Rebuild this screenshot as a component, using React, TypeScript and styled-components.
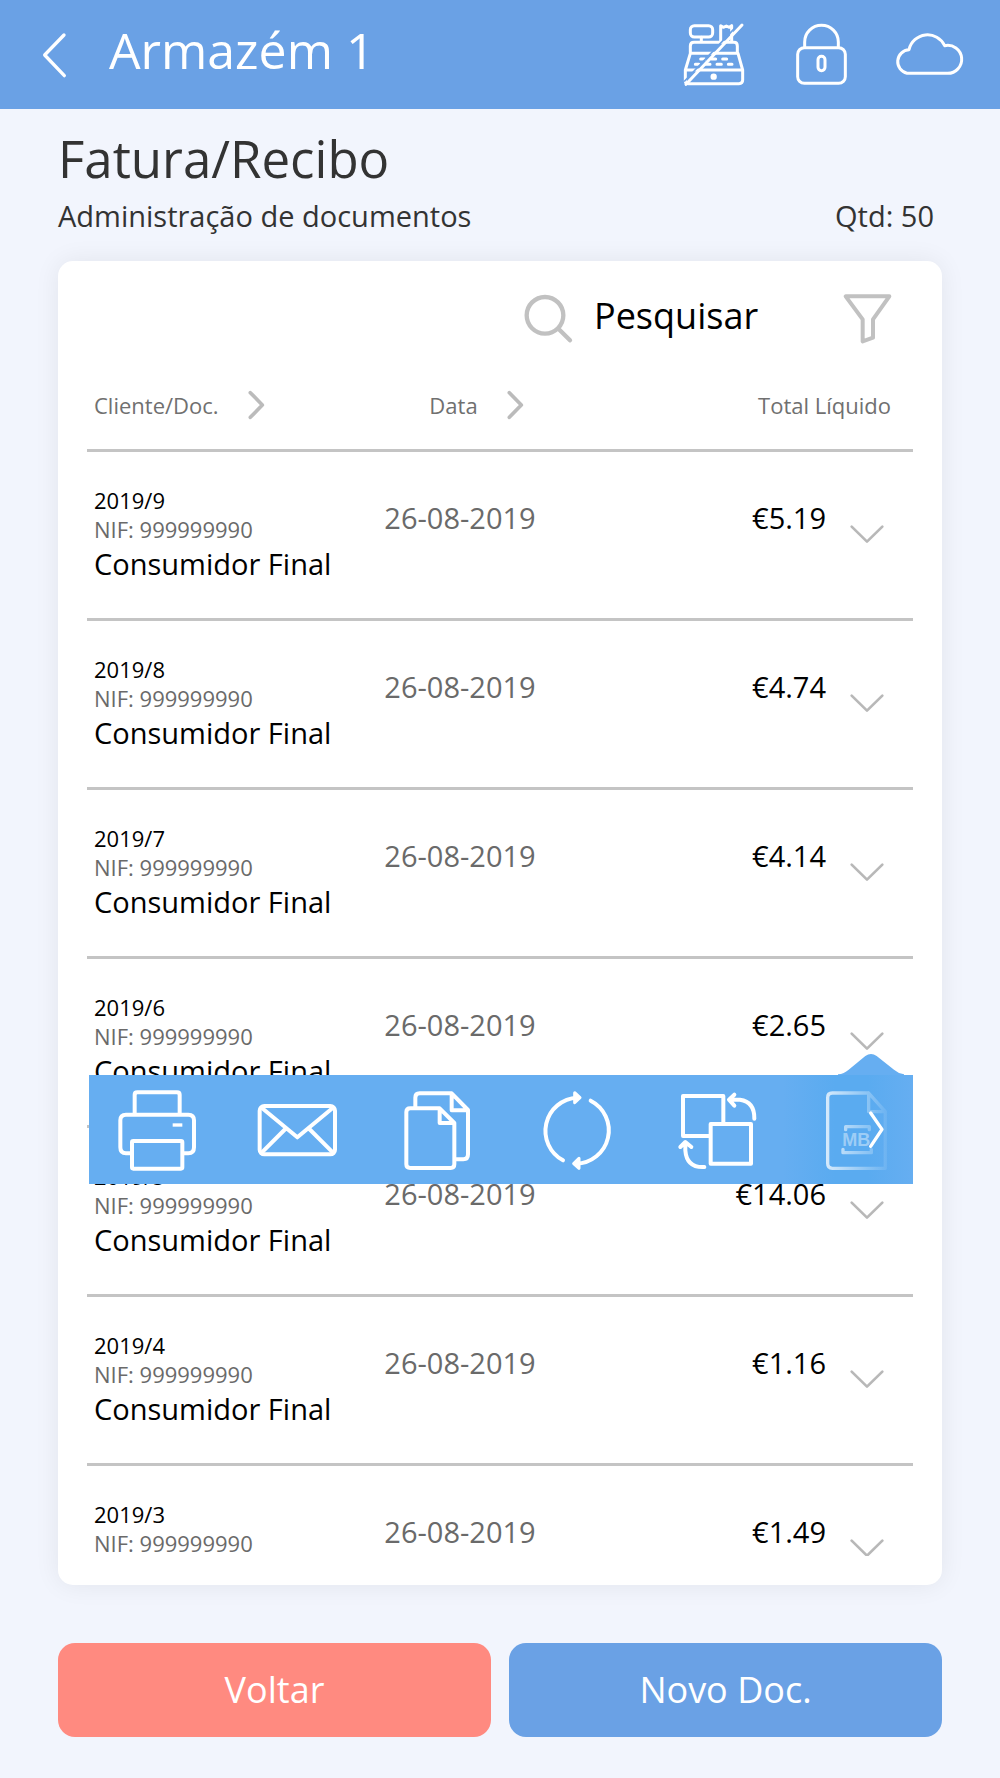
import React from "react";
import styled, { createGlobalStyle } from "styled-components";

const GlobalStyle = createGlobalStyle`
  *, *::before, *::after { box-sizing: border-box; }
  body {
    margin: 0;
    background: #f2f5fd;
    font-family: "Open Sans", "Noto Sans", sans-serif;
    color: #000;
  }
  button, input { font: inherit; color: inherit; }
`;

const Screen = styled.div`
  display: flex;
  flex-direction: column;
  height: 100vh;
`;

const IconButton = styled.button`
  display: flex;
  flex: none;
  padding: 0;
  border: 0;
  background: none;
  cursor: pointer;
`;

const Drawing = styled.svg<{ $color?: string; $weight?: number }>`
  display: block;
  flex: none;
  fill: none;
  stroke: ${(p) => p.$color ?? "#fff"};
  stroke-width: ${(p) => p.$weight ?? 9};
  stroke-linecap: round;
  stroke-linejoin: round;
`;

const TopBar = styled.header`
  display: flex;
  flex: none;
  align-items: center;
  height: 109px;
  padding: 0 36px 0 40px;
  background: #6aa1e5;
  color: #fff;
`;

const BarTitle = styled.h1`
  flex: 1;
  margin: 0;
  padding: 0 0 10px 40px;
  font-size: 50px;
  line-height: 68px;
  font-weight: 400;
`;

const BarActions = styled.div`
  display: flex;
  gap: 43px;
`;

const Content = styled.main`
  display: flex;
  flex: 1;
  flex-direction: column;
  min-height: 0;
  padding: 15px 58px 41px;
`;

const Heading = styled.h2`
  margin: 0;
  font-size: 51px;
  line-height: 68px;
  font-weight: 400;
  color: #333;
`;

const SubHeading = styled.div`
  display: flex;
  justify-content: space-between;
  padding: 4px 8px 0 0;
  margin-bottom: 25px;
  font-size: 29px;
  line-height: 40px;
  color: #333;

  p { margin: 0; }
`;

const Card = styled.section`
  display: flex;
  flex: 1;
  flex-direction: column;
  min-height: 0;
  padding: 31px 29px 29px;
  border-radius: 15px;
  background: #fff;
  box-shadow: 0 0 26px rgba(0, 0, 0, 0.07);
`;

const SearchRow = styled.form`
  display: flex;
  flex: none;
  align-items: center;
  justify-content: flex-end;
  margin: 0 20px 20px 0;
`;

const SearchInput = styled.input`
  width: 267px;
  height: 52px;
  padding: 0 0 6px 20px;
  border: 0;
  outline: 0;
  background: none;
  font-size: 36px;

  &::placeholder { color: #000; opacity: 1; }
`;

const ListArea = styled.div`
  flex: 1;
  min-height: 0;
  overflow-y: auto;
  scrollbar-width: none;
`;

const Table = styled.table`
  width: 100%;
  table-layout: fixed;
  border-collapse: separate;
  border-spacing: 0;
  text-align: left;
`;

const ClientCol = styled.col`width: 36%;`;
const DateCol = styled.col`width: 24%;`;
const ActionCol = styled.col`width: 87px;`;

const HeadCell = styled.th<{ $indent?: number; $end?: boolean }>`
  height: 88px;
  padding: 0 ${(p) => (p.$end ? 22 : 0)}px 3px ${(p) => p.$indent ?? 0}px;
  border-bottom: 3px solid #c4c4c4;
  text-align: ${(p) => (p.$end ? "right" : "left")};
  font-size: 22px;
  line-height: 30px;
  font-weight: 400;
  color: #707070;
`;

const SortButton = styled.button`
  display: flex;
  align-items: center;
  gap: 27px;
  padding: 0;
  border: 0;
  background: none;
  cursor: pointer;
`;

const Row = styled.tr`
  position: relative;
`;

const Cell = styled.td<{ $top: number; $end?: boolean; $muted?: boolean }>`
  height: 169px;
  padding: ${(p) => p.$top}px 0 0;
  border-bottom: 3px solid #c4c4c4;
  vertical-align: top;
  text-align: ${(p) => (p.$end ? "right" : "left")};
  font-size: 29px;
  line-height: 40px;
  color: ${(p) => (p.$muted ? "#6a6a6a" : "#000")};
`;

const Client = styled.div`
  display: flex;
  flex-direction: column;
  padding-left: 7px;
`;

const Small = styled.span<{ $muted?: boolean }>`
  font-size: 22px;
  line-height: 29px;
  color: ${(p) => (p.$muted ? "#6a6a6a" : "#000")};
`;

const ExpandButton = styled(IconButton)`
  padding: 0 25px 0 20px;
`;

const ActionMenu = styled.div`
  position: absolute;
  z-index: 1;
  top: 116px;
  left: 2px;
  right: 0;
  display: flex;
  justify-content: space-between;
  padding: 12px 16px 13px 28px;
  background: #66aef1;
`;

const MenuArrow = styled.svg`
  position: absolute;
  top: -22px;
  right: 9px;
  fill: #66aef1;
`;

const NextShade = styled.div`
  position: absolute;
  top: 0;
  right: 0;
  bottom: 0;
  width: 130px;
  background: linear-gradient(90deg, #5aabf000, #5aabf0 40%, #5aabf0 65%, #5aabf000);
`;

const MenuIconButton = styled(IconButton)`
  position: relative;
`;

const NextButton = styled(IconButton)`
  position: absolute;
  top: 34px;
  right: 28px;
`;

const Footer = styled.footer`
  display: grid;
  flex: none;
  grid-template-columns: 1fr 1fr;
  gap: 18px;
  margin-top: 58px;
`;

const FooterButton = styled.button<{ $color: string }>`
  height: 94px;
  padding: 0;
  border: 0;
  border-radius: 17px;
  background: ${(p) => p.$color};
  color: #fff;
  font-size: 36px;
  line-height: 50px;
  cursor: pointer;
`;

const BackIcon = () => (
  <Drawing width="29" height="48" viewBox="120 90 87 144" $weight={10}>
    <path d="M192 102 L134 162 L193 224" />
  </Drawing>
);

const RegisterIcon = () => (
  <Drawing width="66" height="65" viewBox="66 66 198 195">
    <rect x="91" y="77" width="67" height="34" rx="12" />
    <path d="M124 112 V125 M91 158 V138 Q91 127 102 127 H222 Q232 127 232 138 V158 M182 126 V77 L190 82 L199 78 L208 82 L215 77 V126" />
    <path d="M91 160 H234 L248 210 V240 Q248 251 237 251 H86 Q76 251 76 242 V210 Z M76 210 H248" />
    <path d="M122 177 H134 M155 177 H167 M188 177 H200 M106 193 H117 M138 193 H150 M171 193 H184 M205 193 H216" />
    <circle cx="161" cy="230" r="5" fill="#fff" />
    <path d="M74 243 L240 68" stroke="#6aa1e5" strokeWidth="5" />
    <path d="M78 253 L246 75" />
  </Drawing>
);

const LockIcon = () => (
  <Drawing width="58" height="65" viewBox="396 66 174 195">
    <rect x="416" y="143" width="143" height="107" rx="20" />
    <path d="M437 142 V126 A50 50 0 0 1 538 126 V142" />
    <rect x="477" y="169" width="21" height="43" rx="10" />
  </Drawing>
);

const CloudIcon = () => (
  <Drawing width="72" height="65" viewBox="702 66 216 195">
    <path d="M747 220 A36 36 0 0 1 753 149 A57 57 0 0 1 860 137 A42 42 0 1 1 868 220 Z" />
  </Drawing>
);

const SearchIcon = () => (
  <Drawing width="52" height="52" viewBox="66 306 156 156" $color="#c1c1c1" $weight={13}>
    <circle cx="135" cy="376" r="55" />
    <path d="M176 417 L210 451" />
  </Drawing>
);

const FilterIcon = () => (
  <Drawing width="52" height="52" viewBox="1023 306 156 156" $color="#c1c1c1" $weight={12}>
    <path d="M1037 319 H1168 L1119 388 V443 L1088 454 V388 Z" />
  </Drawing>
);

const SortIcon = () => (
  <Drawing width="20" height="30" viewBox="618 35 60 90" $color="#bbb" $weight={11}>
    <path d="M631 43 L667 80 L631 117" />
  </Drawing>
);

const DownIcon = () => (
  <Drawing width="42" height="24" viewBox="858 188 126 72" $color="#b8b8b8" $weight={8}>
    <path d="M875 199 L921 244 L967 199" />
  </Drawing>
);

const PrinterIcon = () => (
  <Drawing width="80" height="84" viewBox="141 171 240 252" $weight={12}>
    <path d="M194 250 V194 Q194 187 202 187 H321 Q329 187 329 194 V250" />
    <path d="M182 370 H168 Q151 370 151 352 V271 Q151 254 168 254 H355 Q372 254 372 271 V352 Q372 370 355 370 H343" />
    <rect x="186" y="333" width="151" height="83" rx="4" />
    <path d="M313 285 H332" strokeLinecap="square" strokeWidth="10" />
  </Drawing>
);

const MailIcon = () => (
  <Drawing width="80" height="84" viewBox="561 171 240 252" $weight={12}>
    <rect x="569" y="228" width="226" height="145" rx="14" />
    <path d="M575 233 L682 322 L789 233 M575 368 L646 297 M789 368 L718 297" />
  </Drawing>
);

const CopyIcon = () => (
  <Drawing width="80" height="84" viewBox="81 111 240 252" $weight={12}>
    <path d="M136 172 V143 Q136 130 149 130 H245 L294 180 V313 Q294 328 280 328 H256 M245 131 V181 H293" />
    <path d="M209 175 L253 219 V343 Q253 354 242 354 H121 Q109 354 109 343 V186 Q109 175 121 175 Z M209 177 V219 H252" />
  </Drawing>
);

const RefreshIcon = () => (
  <Drawing width="80" height="84" viewBox="501 111 240 252" $weight={12}>
    <path d="M579 331 A100 100 0 0 1 622 143 M662 152 A100 100 0 0 1 618 341" />
    <path d="M614 128 L630 143 L614 158 Z M627 325 L611 341 L627 355 Z" strokeWidth="9" fill="#fff" />
  </Drawing>
);

const SwapIcon = () => (
  <Drawing width="80" height="84" viewBox="111 231 240 252" $weight={12}>
    <path d="M207 378 H129 V258 H250 V337" />
    <rect x="212" y="342" width="121" height="119" />
    <path d="M267 269 H300 Q344 275 343 326 M283 254 L267 269 L283 287 M136 397 V421 Q140 474 193 471 M121 411 L136 396 L154 411" />
  </Drawing>
);

const MultibancoIcon = () => (
  <Drawing width="80" height="84" viewBox="531 231 240 252" $weight={10}>
    <defs>
      <linearGradient id="fade" gradientUnits="userSpaceOnUse" x1="558" y1="0" x2="742" y2="0">
        <stop offset="0" stopColor="#fff" stopOpacity="0.75" />
        <stop offset="1" stopColor="#fff" stopOpacity="0.08" />
      </linearGradient>
    </defs>
    <g stroke="url(#fade)">
      <path d="M686 249 H577 Q563 249 563 263 V460 Q563 475 577 475 H736 V305 L686 249 V305 H736" />
      <path d="M617 359 V350 H688 V359 M609 418 V428 H694 V418" />
    </g>
    <text
      x="607"
      y="408"
      fontFamily="Liberation Sans, sans-serif"
      fontSize="54"
      fontWeight="700"
      fill="#fff"
      fillOpacity="0.42"
      stroke="none"
    >
      MB
    </text>
  </Drawing>
);

const NextIcon = () => (
  <Drawing width="18" height="42" viewBox="682 296 54 126" $weight={10}>
    <path d="M693 308 L727 357 L693 408" />
  </Drawing>
);

const menuItems = [
  { label: "Imprimir", Icon: PrinterIcon },
  { label: "Enviar por email", Icon: MailIcon },
  { label: "Duplicar", Icon: CopyIcon },
  { label: "Atualizar", Icon: RefreshIcon },
  { label: "Converter", Icon: SwapIcon },
  { label: "Multibanco", Icon: MultibancoIcon },
];

const DocumentMenu = () => (
  <ActionMenu>
    <MenuArrow width="66" height="23" viewBox="594 129 198 69" aria-hidden="true">
      <path d="M594 198 V193 Q612 191 626 179 L676 138 Q693 126 710 138 L762 179 Q776 191 792 193 V198 Z" />
    </MenuArrow>
    <NextShade />
    {menuItems.map(({ label, Icon }) => (
      <MenuIconButton key={label} type="button" aria-label={label}>
        <Icon />
      </MenuIconButton>
    ))}
    <NextButton type="button" aria-label="Mais opções">
      <NextIcon />
    </NextButton>
  </ActionMenu>
);

const documents = [
  { id: "2019/9", total: "€5.19" },
  { id: "2019/8", total: "€4.74" },
  { id: "2019/7", total: "€4.14" },
  { id: "2019/6", total: "€2.65" },
  { id: "2019/5", total: "€14.06" },
  { id: "2019/4", total: "€1.16" },
  { id: "2019/3", total: "€1.49" },
];

export default function App() {
  const [openId, setOpenId] = React.useState<string | null>("2019/6");

  return (
    <Screen>
      <GlobalStyle />
      <TopBar>
        <IconButton type="button" aria-label="Voltar atrás">
          <BackIcon />
        </IconButton>
        <BarTitle>Armazém 1</BarTitle>
        <BarActions>
          <IconButton type="button" aria-label="Caixa"><RegisterIcon /></IconButton>
          <IconButton type="button" aria-label="Bloquear"><LockIcon /></IconButton>
          <IconButton type="button" aria-label="Nuvem"><CloudIcon /></IconButton>
        </BarActions>
      </TopBar>
      <Content>
        <Heading>Fatura/Recibo</Heading>
        <SubHeading>
          <p>Administração de documentos</p>
          <p>Qtd: 50</p>
        </SubHeading>
        <Card>
          <SearchRow role="search" onSubmit={(e) => e.preventDefault()}>
            <SearchIcon />
            <SearchInput type="text" placeholder="Pesquisar" aria-label="Pesquisar" />
            <IconButton type="button" aria-label="Filtrar"><FilterIcon /></IconButton>
          </SearchRow>
          <ListArea>
            <Table>
              <colgroup>
                <ClientCol />
                <DateCol />
                <col />
                <ActionCol />
              </colgroup>
              <thead>
                <tr>
                  <HeadCell $indent={7}>
                    <SortButton type="button">Cliente/Doc. <SortIcon /></SortButton>
                  </HeadCell>
                  <HeadCell $indent={45}>
                    <SortButton type="button">Data <SortIcon /></SortButton>
                  </HeadCell>
                  <HeadCell colSpan={2} $end>Total Líquido</HeadCell>
                </tr>
              </thead>
              <tbody>
                {documents.map((doc) => (
                  <Row key={doc.id}>
                    <Cell $top={34}>
                      <Client>
                        <Small>{doc.id}</Small>
                        <Small $muted>NIF: 999999990</Small>
                        <span>Consumidor Final</span>
                      </Client>
                    </Cell>
                    <Cell $top={46} $muted>26-08-2019</Cell>
                    <Cell $top={46} $end>{doc.total}</Cell>
                    <Cell $top={71}>
                      <ExpandButton
                        type="button"
                        aria-label={`Opções de ${doc.id}`}
                        aria-expanded={openId === doc.id}
                        onClick={() => setOpenId(openId === doc.id ? null : doc.id)}
                      >
                        <DownIcon />
                      </ExpandButton>
                      {openId === doc.id && <DocumentMenu />}
                    </Cell>
                  </Row>
                ))}
              </tbody>
            </Table>
          </ListArea>
        </Card>
        <Footer>
          <FooterButton type="button" $color="#ff8a80">Voltar</FooterButton>
          <FooterButton type="button" $color="#6aa1e5">Novo Doc.</FooterButton>
        </Footer>
      </Content>
    </Screen>
  );
}
